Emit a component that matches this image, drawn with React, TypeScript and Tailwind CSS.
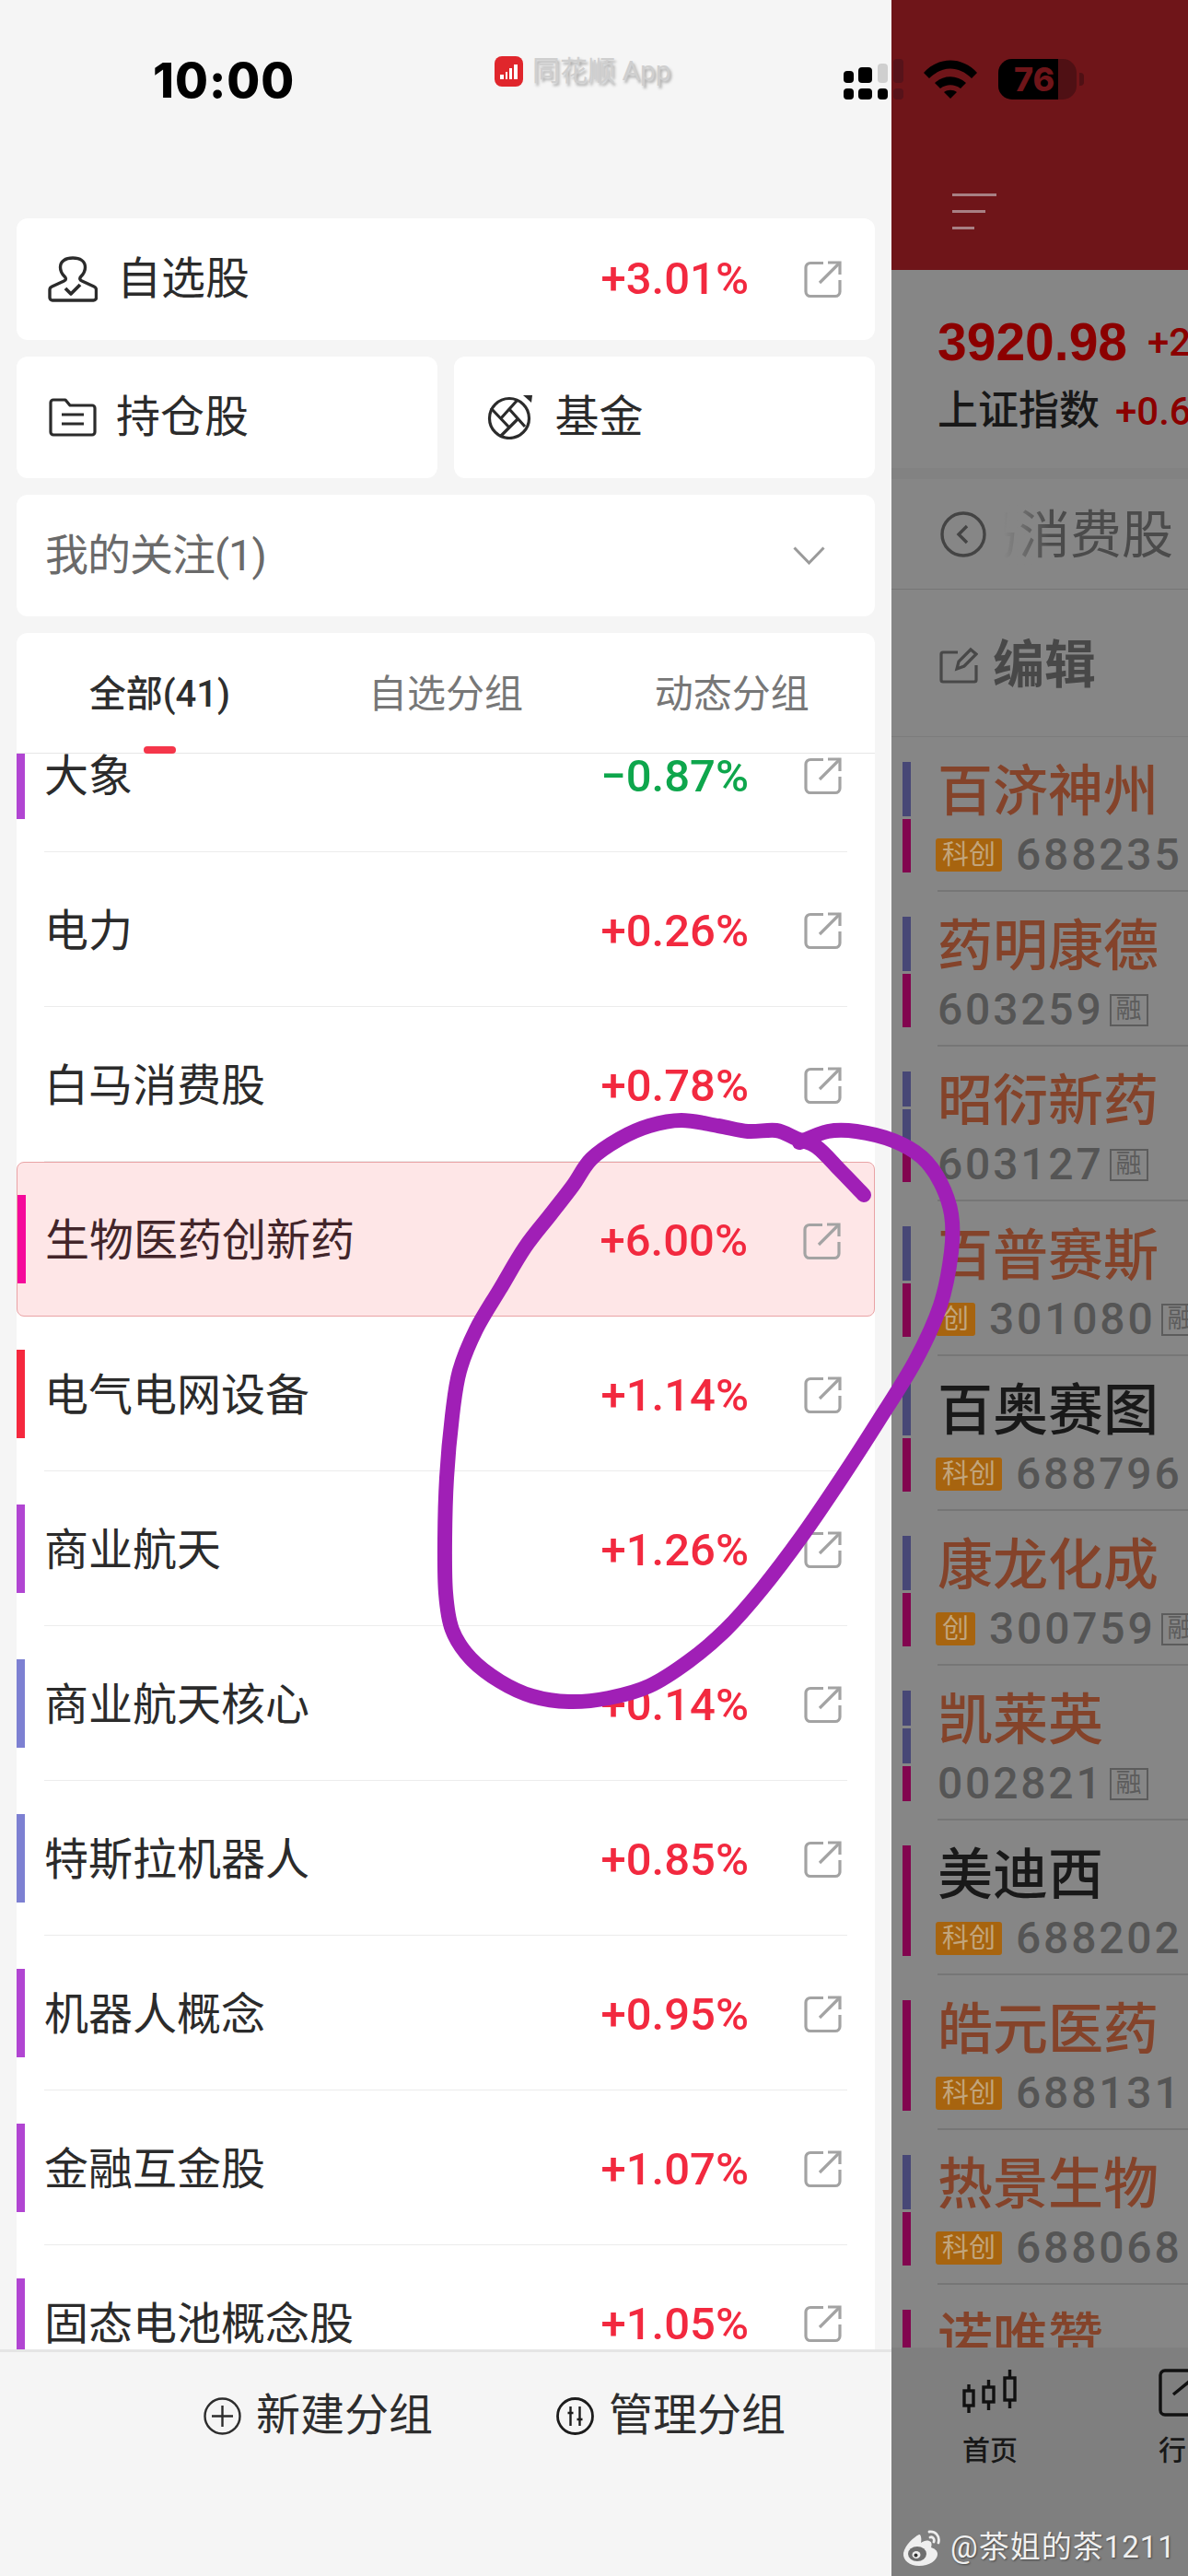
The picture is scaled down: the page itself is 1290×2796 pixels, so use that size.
const RED = "text-[#f2293f]";

const CARD_GROUPS = [
  { name: "大象", pct: "−0.87%", bar: "bg-[#b145d2]", down: true },
  { name: "电力", pct: "+0.26%" },
  { name: "白马消费股", pct: "+0.78%" },
  { name: "生物医药创新药", pct: "+6.00%", bar: "bg-[#f5099b]", active: true },
  { name: "电气电网设备", pct: "+1.14%", bar: "bg-[#f5283e]" },
  { name: "商业航天", pct: "+1.26%", bar: "bg-[#b145d2]" },
  { name: "商业航天核心", pct: "+0.14%", bar: "bg-[#7d80d2]" },
  { name: "特斯拉机器人", pct: "+0.85%", bar: "bg-[#7d80d2]" },
  { name: "机器人概念", pct: "+0.95%", bar: "bg-[#b145d2]" },
  { name: "金融互金股", pct: "+1.07%", bar: "bg-[#b145d2]" },
  { name: "固态电池概念股", pct: "+1.05%", bar: "bg-[#b145d2]" },
];

type Stock = {
  name: string;
  code?: string;
  tag?: string;
  rong?: boolean;
  dark?: boolean;
  bars: string[];
};

const BLUE = "bg-[#474776]";
const MAG = "bg-[#82054f]";

const STOCKS: Stock[] = [
  { name: "百济神州", code: "688235", tag: "科创", bars: [BLUE, MAG] },
  { name: "药明康德", code: "603259", rong: true, bars: [BLUE, MAG] },
  { name: "昭衍新药", code: "603127", rong: true, bars: [BLUE, BLUE, MAG] },
  { name: "百普赛斯", code: "301080", tag: "创", rong: true, bars: [BLUE, MAG] },
  { name: "百奥赛图", code: "688796", tag: "科创", rong: true, dark: true, bars: [BLUE, MAG] },
  { name: "康龙化成", code: "300759", tag: "创", rong: true, bars: [BLUE, MAG] },
  { name: "凯莱英", code: "002821", rong: true, bars: [BLUE, BLUE, MAG] },
  { name: "美迪西", code: "688202", tag: "科创", dark: true, bars: [MAG] },
  { name: "皓元医药", code: "688131", tag: "科创", rong: true, bars: [MAG] },
  { name: "热景生物", code: "688068", tag: "科创", bars: [BLUE, MAG] },
  { name: "诺唯赞", code: "688105", tag: "科创", bars: [MAG] },
];

// hand drawn circle, traced from the screenshot
const SCRIBBLE: [number, number][] = [
  [938, 1297], [912, 1270], [887, 1245], [865, 1236], [843, 1227], [812, 1228], [780, 1222], [740, 1216], [705, 1222],
  [673, 1236], [642, 1258], [622, 1287], [598, 1318], [570, 1354], [543, 1399], [517, 1443], [499, 1488],
  [491, 1537], [485, 1604], [483, 1671], [484, 1729], [491, 1769], [511, 1800], [543, 1825], [578, 1841],
  [618, 1847], [661, 1843], [705, 1830], [748, 1803], [788, 1769], [827, 1725], [871, 1667], [914, 1604],
  [954, 1542], [994, 1477], [1021, 1417], [1033, 1359], [1033, 1318], [1021, 1283], [1001, 1256], [970, 1238],
  [930, 1228], [899, 1228], [868, 1240],
];

function smoothPath(pts: [number, number][]) {
  let d = `M${pts[0][0]} ${pts[0][1]}`;
  for (let i = 0; i < pts.length - 1; i++) {
    const p0 = pts[Math.max(i - 1, 0)];
    const p1 = pts[i];
    const p2 = pts[i + 1];
    const p3 = pts[Math.min(i + 2, pts.length - 1)];
    const c1x = p1[0] + (p2[0] - p0[0]) / 6;
    const c1y = p1[1] + (p2[1] - p0[1]) / 6;
    const c2x = p2[0] - (p3[0] - p1[0]) / 6;
    const c2y = p2[1] - (p3[1] - p1[1]) / 6;
    d += ` C${c1x} ${c1y} ${c2x} ${c2y} ${p2[0]} ${p2[1]}`;
  }
  return d;
}

function ExtIcon() {
  return (
    <svg width="41" height="41" viewBox="0 0 41 41" fill="none" stroke="#a3a3a3" strokeWidth="3.2" className="shrink-0">
      <path d="M21 2.5H7a5 5 0 0 0-5 5v26a5 5 0 0 0 5 5h27a5 5 0 0 0 5-5V21" />
      <path d="M26 2H39V15" />
      <path d="M39 2 17 24" />
    </svg>
  );
}

function UserIcon() {
  return (
    <svg width="54" height="50" viewBox="0 0 54 50" fill="none" stroke="#2b2b2b" strokeWidth="3.4" strokeLinejoin="round" className="shrink-0">
      <path d="M18 22c-3-3-4.500-6-4.500-10C13.500 5.500 19 2 27 2s13.500 3.500 13.500 10c0 4-1.500 7-4.500 10-2 2-1.500 4 1 5l13 6c1.500.7 2.500 2 2.500 3.500V45a3 3 0 0 1-3 3H5a3 3 0 0 1-3-3V36.500C2 35 3 33.700 4.500 33l13-6c2.500-1 2.500-3 .5-5z" />
      <path d="M19 35l6 6 10-10" strokeWidth="3.800" />
    </svg>
  );
}

function FolderIcon() {
  return (
    <svg width="52" height="42" viewBox="0 0 52 42" fill="none" stroke="#2b2b2b" strokeWidth="3.2" strokeLinejoin="round" className="shrink-0">
      <path d="M2 5a3 3 0 0 1 3-3h13l5 6h24a3 3 0 0 1 3 3v26a3 3 0 0 1-3 3H5a3 3 0 0 1-3-3z" />
      <path d="M14 18h24M14 28h24" />
    </svg>
  );
}

function FundIcon() {
  return (
    <svg width="50" height="48" viewBox="0 0 50 48" fill="none" stroke="#2b2b2b" strokeWidth="3.2" className="shrink-0">
      <circle cx="24" cy="25" r="21.500" />
      <path d="M15 25 33 5M24 15 41 34M34 25 14 45M24 35 4 14" />
      <path d="M39 0h10l-1 8z" fill="#2b2b2b" stroke="none" />
    </svg>
  );
}

function PlusCircle() {
  return (
    <svg width="41" height="41" viewBox="0 0 41 41" fill="none" stroke="#2d2d2d" strokeWidth="2.400" className="shrink-0">
      <circle cx="20.500" cy="20.500" r="19" />
      <path d="M20.500 9v23M9 20.500h23" />
    </svg>
  );
}

function TuneCircle() {
  return (
    <svg width="41" height="41" viewBox="0 0 41 41" fill="none" stroke="#1c1c1c" strokeWidth="2.800" className="shrink-0">
      <circle cx="20.500" cy="20.500" r="19" />
      <path d="M15.500 10v21M25.500 10v21" strokeWidth="2.400" />
      <path d="M12.500 17h6M22.500 24h6" strokeWidth="2.400" />
    </svg>
  );
}

function Wifi() {
  return (
    <svg width="58" height="42" viewBox="0 0 58 42" className="shrink-0">
      <path d="M0 14C16-4 42-4 58 14l-6 6C38 6 20 6 6 20z" fill="#000" />
      <path d="M12 25c10-9 24-9 34 0l-6 6c-7-5-15-5-22 0z" fill="#000" />
      <path d="M22 35c4-3 10-3 14 0l-7 7z" fill="#000" />
    </svg>
  );
}

function CandleIcon() {
  return (
    <svg width="60" height="52" viewBox="0 0 60 52" fill="none" stroke="#111" strokeWidth="3.400" className="shrink-0">
      <rect x="2" y="24" width="10" height="16" />
      <path d="M7 17v7M7 40v8" />
      <rect x="23" y="20" width="11" height="16" />
      <path d="M28.500 12v8M28.500 36v9" />
      <rect x="46" y="10" width="11" height="24" />
      <path d="M51.500 1v9M51.500 34v9" />
    </svg>
  );
}

function MarketIcon() {
  return (
    <svg width="50" height="52" viewBox="0 0 50 52" fill="none" stroke="#111" strokeWidth="3.400" className="shrink-0">
      <path d="M50 2H7a5 5 0 0 0-5 5v38a5 5 0 0 0 5 5h43" />
      <path d="M16 28 32 15l18 13" />
    </svg>
  );
}

function Weibo() {
  return (
    <svg width="44" height="42" viewBox="0 0 44 42" className="shrink-0">
      <path d="M18 7c-6 3-15 11-17 20-1 8 7 14 17 14 11 0 20-6 20-13 0-4-4-6-7-7 1-3 1-6-2-7-3-1-6 0-9 2 1-4 0-10-2-9z" fill="#efefef" />
      <ellipse cx="16" cy="28" rx="10" ry="8" fill="#6f6f6f" />
      <ellipse cx="15" cy="29" rx="4.500" ry="4" fill="#efefef" />
      <circle cx="14.500" cy="29.500" r="2" fill="#333" />
      <path d="M29 4c6-1 12 4 10 12M30 10c3-1 5 2 4 5" stroke="#efefef" strokeWidth="2.800" fill="none" strokeLinecap="round" />
    </svg>
  );
}

function StatusBar() {
  const cols = [
    { ml: "ml-0", w: "w-[11px]", top: "h-[13px] bg-black", bottom: "bg-black" },
    { ml: "ml-[5px]", w: "w-[15px]", top: "h-[17px] bg-black", bottom: "bg-black" },
    { ml: "ml-[6px]", w: "w-[11px]", top: "h-[21px] bg-[#cfcfcf]", bottom: "bg-black" },
    { ml: "ml-[6px]", w: "w-[11px]", top: "h-[26px] bg-[#57131a]", bottom: "bg-[#57131a]" },
  ];

  return (
    <div className="absolute left-0 top-0 flex h-[120px] w-full items-start">
      <div className="ml-[166px] mt-[56px] w-[153px] whitespace-nowrap font-['Inter',sans-serif] text-[52px] font-extrabold leading-[64px] tracking-[1px] text-black">
        10:00
      </div>
      <div className="ml-[218px] mt-[57px] flex w-[379px] items-center">
        <div className="flex h-[33px] w-[31px] items-end justify-center rounded-[8px] bg-[#e0262c] pb-[8px]">
          <div className="flex items-end gap-[2px]">
            <span className="h-[5px] w-[4px] bg-white" />
            <span className="h-[8px] w-[2px] bg-white" />
            <span className="h-[12px] w-[3px] bg-white" />
            <span className="h-[16px] w-[4px] bg-white" />
          </div>
        </div>
        <span className="ml-[10px] whitespace-nowrap text-[30px] leading-[40px] text-[#cfcfcf] [text-shadow:2px_3px_3px_#aaa]">
          同花顺 App
        </span>
      </div>
      <div className="mt-[64px] flex h-[44px] items-end">
        {cols.map((col) => (
          <div key={col.ml + col.top} className={`${col.ml} ${col.w} flex flex-col gap-[6px]`}>
            <span className={`${col.top} rounded-[4px]`} />
            <span className={`${col.bottom} h-[12px] rounded-[4px]`} />
          </div>
        ))}
        <div className="mb-[1px] ml-[22px]">
          <Wifi />
        </div>
        <div className="relative ml-[23px] flex h-[44px] w-[85px] items-center overflow-hidden rounded-[15px] bg-[#4f1014]">
          <span className="absolute inset-y-0 left-0 w-[65px] bg-black" />
          <span className="relative ml-[17px] font-['Inter',sans-serif] text-[36px] font-extrabold leading-[44px] text-[#6f1519]">
            76
          </span>
        </div>
        <span className="mb-[15px] ml-[3px] h-[14px] w-[5px] rounded-r-[4px] bg-[#4f1014]" />
      </div>
    </div>
  );
}

function GroupRow({ item }: { item: (typeof CARD_GROUPS)[number] }) {
  return (
    <div
      className={`flex h-[168px] items-center ${
        item.active ? "rounded-[8px] border border-[#e9a3a5] bg-[#fee6e7]" : ""
      }`}
    >
      <span className={`h-[96px] w-[9px] shrink-0 ${item.bar ?? ""}`} />
      <div
        className={`ml-[21px] mr-[30px] flex h-full flex-1 items-center pt-[4px] ${
          item.active ? "" : "border-b border-[#ececec]"
        }`}
      >
        <span className={`flex-1 text-[48px] leading-[60px] ${item.active ? "text-[#42252a]" : "text-[#2b2b2b]"}`}>
          {item.name}
        </span>
        <span className={`text-[49px] font-medium leading-[60px] ${item.down ? "text-[#0ea64c]" : RED}`}>
          {item.pct}
        </span>
        <span className="ml-[60px] mr-[6px] flex">
          <ExtIcon />
        </span>
      </div>
    </div>
  );
}

function Drawer() {
  return (
    <div className="flex h-[2796px] w-[968px] shrink-0 flex-col bg-[#f5f5f5] pt-[237px]">
      <div className="flex flex-col gap-[18px] px-[18px]">
        <div className="flex h-[132px] items-center rounded-[12px] bg-white pl-[34px] pr-[36px]">
          <UserIcon />
          <span className="ml-[21px] flex-1 text-[48px] leading-[60px] text-[#2b2b2b]">自选股</span>
          <span className={`text-[49px] font-medium leading-[60px] ${RED}`}>+3.01%</span>
          <span className="ml-[60px] flex">
            <ExtIcon />
          </span>
        </div>
        <div className="flex gap-[18px]">
          <div className="flex h-[132px] flex-1 items-center gap-[21px] rounded-[12px] bg-white pl-[35px]">
            <FolderIcon />
            <span className="text-[48px] leading-[60px] text-[#2b2b2b]">持仓股</span>
          </div>
          <div className="flex h-[132px] flex-1 items-center gap-[24px] rounded-[12px] bg-white pl-[36px]">
            <FundIcon />
            <span className="text-[48px] leading-[60px] text-[#2b2b2b]">基金</span>
          </div>
        </div>
        <div className="flex h-[132px] items-center justify-between rounded-[12px] bg-white pl-[31px] pr-[54px]">
          <span className="text-[47px] leading-[60px] tracking-[-1px] text-[#6a6a6a]">我的关注(1)</span>
          <svg width="35" height="20" viewBox="0 0 35 20" fill="none" stroke="#9a9a9a" strokeWidth="3">
            <path d="M1.500 1.500 17.500 18 33.500 1.500" />
          </svg>
        </div>
        <div className="relative flex h-[1863px] flex-col overflow-hidden rounded-t-[12px] bg-white">
          <div className="grid h-[131px] shrink-0 grid-cols-3 items-center border-b border-[#e6e6e6] pt-[3px] text-center text-[42px] leading-[52px]">
            <span className="text-[40px] font-medium text-[#2e2e2e]">全部(41)</span>
            <span className="text-[#777]">自选分组</span>
            <span className="text-[#777]">动态分组</span>
          </div>
          <span className="absolute left-[138px] top-[123px] z-10 h-[8px] w-[35px] rounded-full bg-[#f5364a]" />
          <div className="flex-1 overflow-hidden">
            <div className="-mt-[61px]">
              {CARD_GROUPS.map((item) => (
                <GroupRow key={item.name} item={item} />
              ))}
            </div>
          </div>
        </div>
      </div>
      <div className="flex flex-1 items-start border-t-[3px] border-[#e5e5e5] pl-[221px] pt-[44px] text-[48px] leading-[50px] text-[#2d2d2d]">
        <span className="flex items-center gap-[16px]">
          <PlusCircle />
          新建分组
        </span>
        <span className="ml-[134px] flex items-center gap-[16px]">
          <TuneCircle />
          管理分组
        </span>
      </div>
    </div>
  );
}

function StockRow({ stock }: { stock: Stock }) {
  return (
    <div className="flex h-[168px] shrink-0">
      <div className="ml-[12px] flex h-[120px] w-[9px] shrink-0 translate-y-[27px] flex-col gap-[3px]">
        {stock.bars.map((bar, i) => (
          <span key={i} className={`${bar} flex-1`} />
        ))}
      </div>
      <div className="ml-[29px] flex-1 whitespace-nowrap border-b-[2px] border-[#767676]">
        <div className={`mt-[15px] h-[90px] text-[60px] font-medium leading-[90px] ${stock.dark ? "text-[#191919]" : "text-[#84432a]"}`}>
          {stock.name}
        </div>
        <div className="mt-[3px] flex h-[40px] items-center">
          {stock.tag && (
            <span className="mr-[15px] -ml-[2px] flex h-[36px] items-center rounded-[3px] bg-[#a7640f] px-[7px] text-[29px] leading-[36px] text-[#c2a57c]">
              {stock.tag}
            </span>
          )}
          <span className="text-[48px] font-medium leading-[40px] tracking-[2.800px] text-[#555]">{stock.code}</span>
          {stock.rong && (
            <span className="ml-[6px] flex h-[35px] w-[42px] shrink-0 items-center justify-center border-2 border-[#5c5c5c] text-[28px] leading-[30px] text-[#5c5c5c]">
              融
            </span>
          )}
        </div>
      </div>
    </div>
  );
}

function RightPanel() {
  return (
    <div className="flex h-[2796px] w-[322px] shrink-0 flex-col overflow-hidden bg-[#868686]">
      <div className="flex h-[293px] shrink-0 flex-col gap-[15px] bg-[#6f1519] pl-[66px] pt-[210px]">
        <span className="h-[3px] w-[48px] bg-[#a88084]" />
        <span className="h-[3px] w-[36px] bg-[#a88084]" />
        <span className="h-[3px] w-[24px] bg-[#a88084]" />
      </div>
      <div className="flex h-[215px] shrink-0 flex-col whitespace-nowrap pl-[50px] pt-[42px]">
        <div className="flex h-[72px] items-center">
          <span className="font-['Liberation_Sans','Noto_Sans_CJK_SC',sans-serif] text-[57px] font-bold leading-[72px] text-[#8b0000]">
            3920.98
          </span>
          <span className="ml-[22px] text-[42px] font-medium text-[#8b0000]">+2</span>
        </div>
        <div className="mt-[9px] flex h-[60px] items-center">
          <span className="text-[44px] font-medium leading-[60px] text-[#181818]">上证指数</span>
          <span className="ml-[17px] text-[42px] font-medium text-[#8b0000]">+0.6</span>
        </div>
      </div>
      <div className="h-[12px] shrink-0 bg-[#828282]" />
      <div className="flex h-[120px] shrink-0 items-center whitespace-nowrap border-b border-[#767676] pl-[53px]">
        <svg width="50" height="50" viewBox="0 0 50 50" fill="none" stroke="#444" strokeWidth="3.400" className="shrink-0">
          <circle cx="25" cy="25" r="23" />
          <path d="M29 16 20 25l9 9" />
        </svg>
        <div className="relative ml-[19px] flex w-[184px] justify-end overflow-hidden pt-[2px]">
          <span className="shrink-0 text-[56px] leading-[70px] text-[#4b4b4b]">白马消费股</span>
          <span className="absolute inset-y-0 left-0 w-[50px] bg-linear-to-r from-[#868686] to-transparent" />
        </div>
      </div>
      <div className="flex h-[160px] shrink-0 items-center whitespace-nowrap border-b border-[#7c7c7c] pl-[52px] pt-[4px]">
        <svg width="42" height="40" viewBox="0 0 42 40" fill="none" stroke="#484848" strokeWidth="3.200" className="shrink-0">
          <path d="M20 6H4a2 2 0 0 0-2 2v28a2 2 0 0 0 2 2h34a2 2 0 0 0 2-2V20" />
          <path d="M19 24l2-8L34 3l6 5-13 13z" />
        </svg>
        <span className="ml-[16px] text-[56px] font-bold leading-[70px] text-[#484848]">编辑</span>
      </div>
      <div className="flex h-[1748px] shrink-0 flex-col overflow-hidden">
        {STOCKS.map((stock) => (
          <StockRow key={stock.name} stock={stock} />
        ))}
      </div>
      <div className="flex flex-1 items-start bg-[#7f7f7f] pt-[23px]">
        <div className="ml-[76px] flex w-[62px] shrink-0 flex-col items-center">
          <CandleIcon />
          <span className="mt-[17px] whitespace-nowrap text-[30px] font-medium leading-[40px] text-[#181818]">首页</span>
        </div>
        <div className="ml-[152px] flex shrink-0 flex-col items-start">
          <MarketIcon />
          <span className="mt-[17px] text-[30px] font-medium leading-[40px] text-[#181818]">行</span>
        </div>
      </div>
    </div>
  );
}

export default function App() {
  return (
    <div className="relative flex h-[2796px] w-[1290px] overflow-hidden font-['Roboto','Noto_Sans_CJK_SC',sans-serif]">
      <Drawer />
      <RightPanel />
      <StatusBar />
      <svg width="1290" height="2796" viewBox="0 0 1290 2796" fill="none" className="pointer-events-none absolute left-0 top-0">
        <path d={smoothPath(SCRIBBLE)} stroke="#a01fb6" strokeWidth="16" strokeLinecap="round" strokeLinejoin="round" />
      </svg>
      <div className="absolute bottom-[10px] left-[980px] flex items-center gap-[8px] whitespace-nowrap text-[33px] leading-[42px] tracking-[1px] text-[#f0f0f0] [text-shadow:1px_1px_2px_#444]">
        <Weibo />
        @茶姐的茶1211
      </div>
    </div>
  );
}
